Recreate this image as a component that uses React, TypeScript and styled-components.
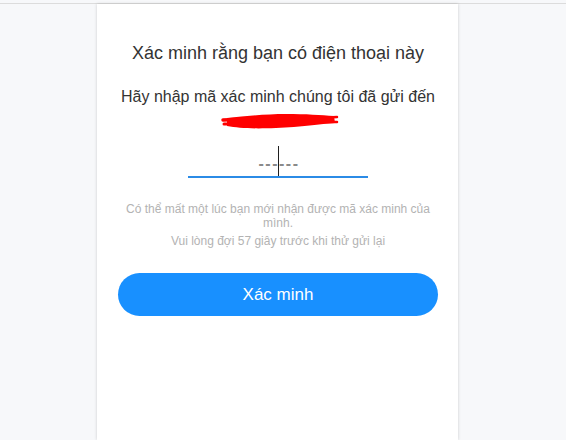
import styled, { createGlobalStyle } from 'styled-components';

const GlobalStyle = createGlobalStyle`
  html, body {
    margin: 0;
    padding: 0;
    background: #f7f8fa;
    font-family: 'Liberation Sans', Arial, sans-serif;
    overflow: hidden;
  }
`;

const App = () => {
  return (
    <Page>
      <GlobalStyle />
      <TopBar />
      <Card>
        <Title>Xác minh rằng bạn có điện thoại này</Title>
        <Subtitle>Hãy nhập mã xác minh chúng tôi đã gửi đến</Subtitle>

        {/* red marker scribble hiding the phone number */}
        <Redacted width="118" height="18" viewBox="0 0 118 18">
          <path
            d="M6 6 C 25 4, 45 2, 65 2 S 100 3, 113 4 L 114 11 C 100 12, 80 15, 55 16 S 18 16, 6 14 Z"
            fill="#ff0000"
          />
          <path d="M2 8 L 26 7" stroke="#ff0000" strokeWidth="3.5" strokeLinecap="round" />
          <path d="M3 12 L 24 12" stroke="#ff0000" strokeWidth="3" strokeLinecap="round" />
          <path d="M98 6 L 116 5" stroke="#ff0000" strokeWidth="2.5" strokeLinecap="round" />
          <path d="M100 10 L 116 10" stroke="#ff0000" strokeWidth="2.5" strokeLinecap="round" />
        </Redacted>

        <CodeField>
          <Placeholder>------</Placeholder>
          <Caret />
        </CodeField>

        <Hint>Có thể mất một lúc bạn mới nhận được mã xác minh của mình.</Hint>
        <Hint $gap={4}>Vui lòng đợi 57 giây trước khi thử gửi lại</Hint>

        <VerifyButton type="button">Xác minh</VerifyButton>
      </Card>
    </Page>
  );
};

export default App;

const Page = styled.div`
  height: 440px;
  display: flex;
  flex-direction: column;
`;

const TopBar = styled.div`
  height: 3px;
  flex-shrink: 0;
  background: #f7f8fa;
  border-bottom: 1px solid #dcdcdc;
`;

const Card = styled.div`
  width: 361px;
  margin-left: 97px;
  flex: 1;
  box-sizing: border-box;
  background: #ffffff;
  box-shadow: 0 0 3px rgba(0, 0, 0, 0.18);
  padding: 37px 20px 0 21px;
  display: flex;
  flex-direction: column;
  align-items: center;
`;

const Title = styled.h1`
  margin: 0;
  font-size: 18px;
  line-height: 24px;
  font-weight: 400;
  color: #333333;
  text-align: center;
`;

const Subtitle = styled.p`
  margin: 21px 0 0;
  font-size: 16px;
  line-height: 22px;
  color: #333333;
  text-align: center;
`;

const Redacted = styled.svg`
  display: block;
  margin-top: 4px;
  margin-left: 4px;
`;

const CodeField = styled.div`
  position: relative;
  margin-top: 16px;
  width: 180px;
  height: 30px;
  border-bottom: 2px solid #2b8be6;
  display: flex;
  align-items: flex-end;
  justify-content: center;
`;

const Placeholder = styled.span`
  font-size: 16px;
  font-weight: 700;
  line-height: 22px;
  color: #8a8a8a;
  letter-spacing: 1.5px;
  margin-left: 2px;
  margin-bottom: 1px;
`;

const Caret = styled.span`
  position: absolute;
  left: 90px;
  top: 0;
  bottom: 0;
  width: 1px;
  background: #1f1f1f;
`;

const Hint = styled.p<{ $gap?: number }>`
  margin: ${({ $gap }) => $gap ?? 24}px 0 0;
  width: 320px;
  font-size: 12px;
  line-height: 14px;
  color: #b3b3b3;
  text-align: center;
`;

const VerifyButton = styled.button`
  margin-top: 25px;
  width: 320px;
  height: 43px;
  border: none;
  border-radius: 22px;
  background: #1890ff;
  color: #ffffff;
  font-family: 'Liberation Sans', Arial, sans-serif;
  font-size: 17px;
  cursor: pointer;
`;
